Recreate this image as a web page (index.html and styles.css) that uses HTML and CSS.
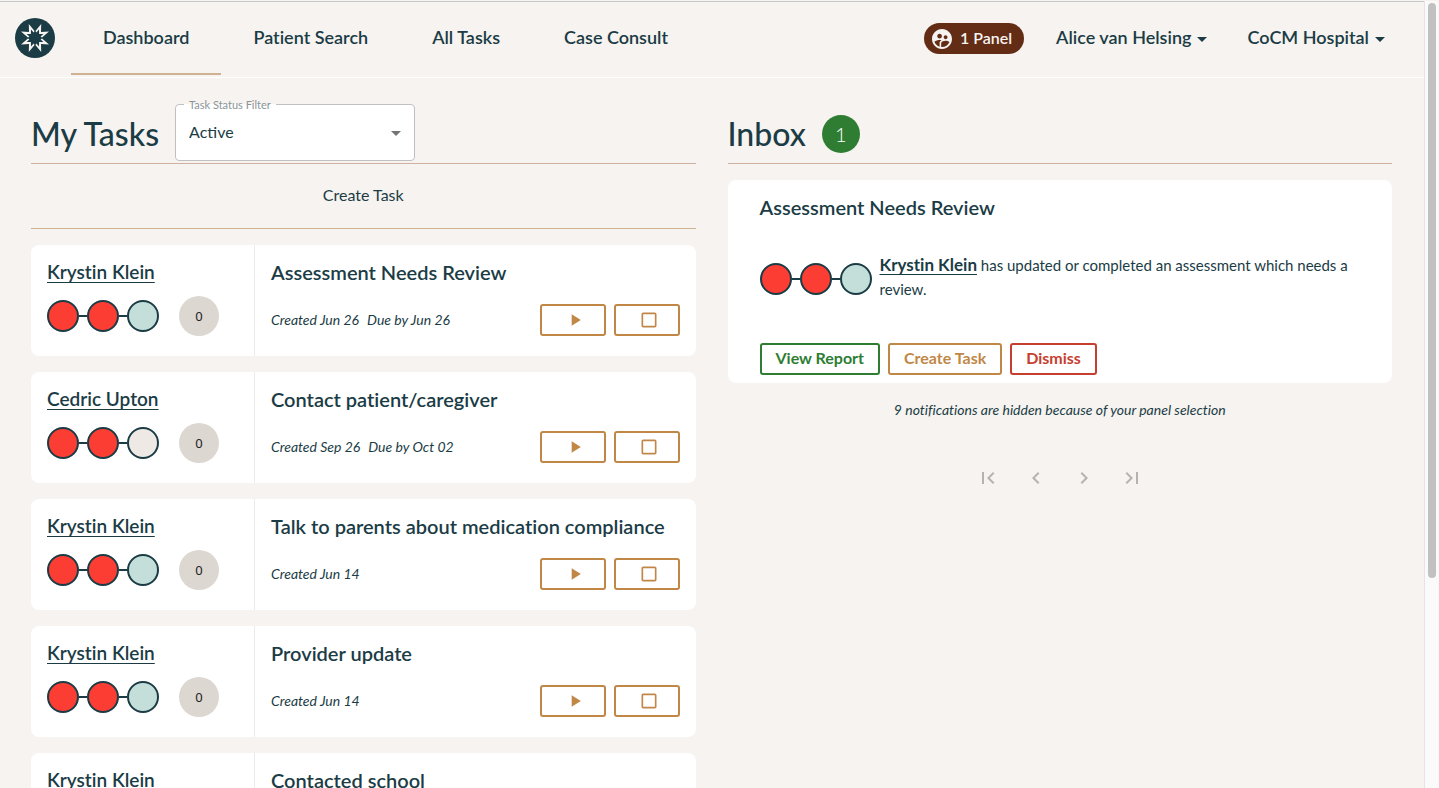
FILE: index.html
```
<!DOCTYPE html>
<html lang="en">
<head>
<meta charset="UTF-8">
<meta name="viewport" content="width=device-width, initial-scale=1.0">
<title>Dashboard</title>
<link rel="stylesheet" href="styles.css">
</head>
<body>
<svg class="symbols" aria-hidden="true">
    <symbol id="play" viewBox="0 0 24 24"><path d="M8 5v14l11-7z"/></symbol>
    <symbol id="stop" viewBox="0 0 24 24"><path fill-rule="evenodd" d="M19 3H5c-1.1 0-2 .9-2 2v14c0 1.1.9 2 2 2h14c1.1 0 2-.9 2-2V5c0-1.1-.9-2-2-2zm0 16H5V5h14v14z"/></symbol>
</svg>

<div class="window">
<div class="page">
    <header class="header">
        <a href="#" class="logo" aria-label="Home">
            <svg viewBox="0 0 40 40" width="40" height="40">
                <circle cx="20" cy="20" r="20" fill="#1b3c45"/>
                <path fill="#f6f3f0" d="M20 13.5L26.2 6L26 14L34 13.6L26.5 20L34 26.4L26 26L26.2 34L20 26.5L13.8 34L14 26L6 26.4L13.5 20L6 13.6L14 14L13.8 6Z"/>
                <path fill="#1b3c45" d="M20 12.6L21.4 14.4L24 11.6L24.1 15.9L28.4 16L25.6 18.6L27.4 20L25.6 21.4L28.4 24L24.1 24.1L24 28.4L21.4 25.6L20 27.4L18.6 25.6L16 28.4L15.9 24.1L11.6 24L14.4 21.4L12.6 20L14.4 18.6L11.6 16L15.9 15.9L16 11.6L18.6 14.4Z"/>
            </svg>
        </a>
        <nav class="nav">
            <a href="#" class="nav-link active">Dashboard</a>
            <a href="#" class="nav-link">Patient Search</a>
            <a href="#" class="nav-link">All Tasks</a>
            <a href="#" class="nav-link">Case Consult</a>
        </nav>
        <button class="panel-button">
            <svg viewBox="0 0 24 24" width="24" height="24" fill="currentColor"><path d="M11.99 2c-5.52 0-10 4.48-10 10s4.48 10 10 10 10-4.48 10-10-4.48-10-10-10zm3.61 6.34c1.07 0 1.93.86 1.93 1.93 0 1.07-.86 1.93-1.93 1.93-1.07 0-1.93-.86-1.93-1.93-.01-1.07.86-1.93 1.93-1.93zm-6-1.58c1.3 0 2.36 1.06 2.36 2.36 0 1.3-1.06 2.36-2.36 2.36-1.3 0-2.36-1.06-2.36-2.36 0-1.31 1.05-2.36 2.36-2.36zm0 9.13v3.75c-2.4-.75-4.3-2.6-5.14-4.96 1.05-1.12 3.67-1.69 5.14-1.69.53 0 1.2.08 1.9.22-1.64.87-1.9 2.02-1.9 2.68zM11.99 20c-.27 0-.53-.01-.79-.04v-4.07c0-1.42 2.94-2.13 4.4-2.13 1.07 0 2.92.39 3.84 1.15-1.17 2.97-4.06 5.09-7.45 5.09z"/></svg>
            <span>1 Panel</span>
        </button>
        <button class="menu-button">Alice van Helsing <span class="caret"></span></button>
        <button class="menu-button">CoCM Hospital <span class="caret"></span></button>
    </header>

    <main class="content">
        <section class="column">
            <div class="column-header">
                <h1>My Tasks</h1>
                <fieldset class="filter">
                    <legend><label for="status">Task Status Filter</label></legend>
                    <select id="status">
                        <option>Active</option>
                        <option>Completed</option>
                    </select>
                    <span class="caret"></span>
                </fieldset>
            </div>
            <button class="create-task">Create Task</button>

            <div class="task-list">
                <article class="task">
                    <div class="patient">
                        <a href="#" class="patient-name">Krystin Klein</a>
                        <div class="patient-status">
                            <div class="dots"><span class="dot red"></span><span class="dot red"></span><span class="dot green"></span></div>
                            <span class="count">0</span>
                        </div>
                    </div>
                    <div class="task-info">
                        <h2>Assessment Needs Review</h2>
                        <div class="task-row">
                            <p class="dates"><span>Created Jun 26</span><span>Due by Jun 26</span></p>
                            <button class="icon-button" aria-label="Start"><svg><use href="#play"/></svg></button>
                            <button class="icon-button" aria-label="Complete"><svg><use href="#stop"/></svg></button>
                        </div>
                    </div>
                </article>

                <article class="task">
                    <div class="patient">
                        <a href="#" class="patient-name">Cedric Upton</a>
                        <div class="patient-status">
                            <div class="dots"><span class="dot red"></span><span class="dot red"></span><span class="dot"></span></div>
                            <span class="count">0</span>
                        </div>
                    </div>
                    <div class="task-info">
                        <h2>Contact patient/caregiver</h2>
                        <div class="task-row">
                            <p class="dates"><span>Created Sep 26</span><span>Due by Oct 02</span></p>
                            <button class="icon-button" aria-label="Start"><svg><use href="#play"/></svg></button>
                            <button class="icon-button" aria-label="Complete"><svg><use href="#stop"/></svg></button>
                        </div>
                    </div>
                </article>

                <article class="task">
                    <div class="patient">
                        <a href="#" class="patient-name">Krystin Klein</a>
                        <div class="patient-status">
                            <div class="dots"><span class="dot red"></span><span class="dot red"></span><span class="dot green"></span></div>
                            <span class="count">0</span>
                        </div>
                    </div>
                    <div class="task-info">
                        <h2>Talk to parents about medication compliance</h2>
                        <div class="task-row">
                            <p class="dates"><span>Created Jun 14</span></p>
                            <button class="icon-button" aria-label="Start"><svg><use href="#play"/></svg></button>
                            <button class="icon-button" aria-label="Complete"><svg><use href="#stop"/></svg></button>
                        </div>
                    </div>
                </article>

                <article class="task">
                    <div class="patient">
                        <a href="#" class="patient-name">Krystin Klein</a>
                        <div class="patient-status">
                            <div class="dots"><span class="dot red"></span><span class="dot red"></span><span class="dot green"></span></div>
                            <span class="count">0</span>
                        </div>
                    </div>
                    <div class="task-info">
                        <h2>Provider update</h2>
                        <div class="task-row">
                            <p class="dates"><span>Created Jun 14</span></p>
                            <button class="icon-button" aria-label="Start"><svg><use href="#play"/></svg></button>
                            <button class="icon-button" aria-label="Complete"><svg><use href="#stop"/></svg></button>
                        </div>
                    </div>
                </article>

                <article class="task">
                    <div class="patient">
                        <a href="#" class="patient-name">Krystin Klein</a>
                    </div>
                    <div class="task-info">
                        <h2>Contacted school</h2>
                    </div>
                </article>
            </div>
        </section>

        <section class="column">
            <div class="column-header">
                <h1>Inbox</h1>
                <span class="badge">1</span>
            </div>

            <article class="message">
                <h2>Assessment Needs Review</h2>
                <div class="message-body">
                    <div class="dots"><span class="dot red"></span><span class="dot red"></span><span class="dot green"></span></div>
                    <p><a href="#">Krystin Klein</a> has updated or completed an assessment which needs a review.</p>
                </div>
                <div class="actions">
                    <button class="action view">View Report</button>
                    <button class="action create">Create Task</button>
                    <button class="action dismiss">Dismiss</button>
                </div>
            </article>

            <p class="hidden-note">9 notifications are hidden because of your panel selection</p>

            <div class="pager">
                <button disabled aria-label="First page"><svg viewBox="0 0 24 24"><path d="M18.41 16.59L13.82 12l4.59-4.59L17 6l-6 6 6 6zM6 6h2v12H6z"/></svg></button>
                <button disabled aria-label="Previous page"><svg viewBox="0 0 24 24"><path d="M15.41 7.41L14 6l-6 6 6 6 1.41-1.41L10.83 12z"/></svg></button>
                <button disabled aria-label="Next page"><svg viewBox="0 0 24 24"><path d="M10 6L8.59 7.41 13.17 12l-4.58 4.59L10 18l6-6z"/></svg></button>
                <button disabled aria-label="Last page"><svg viewBox="0 0 24 24"><path d="M5.59 7.41L10.18 12l-4.59 4.59L7 18l6-6-6-6zM16 6h2v12h-2z"/></svg></button>
            </div>
        </section>
    </main>
</div>
<div class="scrollbar"><div class="thumb"></div></div>
</div>
</body>
</html>
```
FILE: styles.css
```
* {
    box-sizing: border-box;
}

body {
    margin: 0;
    font-family: Lato, sans-serif;
    font-size: 16px;
    line-height: 24px;
    font-variant-ligatures: none;
    color: #1b3c45;
    background-color: #f6f3f0;
}

h1,
h2,
p {
    margin: 0;
}

a {
    color: inherit;
}

button {
    font-family: inherit;
    color: inherit;
    background: none;
    border: none;
    padding: 0;
    cursor: pointer;
}

.symbols {
    display: none;
}

.window {
    display: flex;
    height: 100vh;
    overflow: hidden;
    padding-top: 1px;
}

.page {
    flex: 1;
    min-width: 0;
    border-top: 1px solid #c6cacb;
}

/* header */

.header {
    display: flex;
    align-items: center;
    height: 76px;
    padding: 0 39px 2px 15px;
    border-bottom: 1px solid #fff;
}

.logo {
    padding-bottom: 1px;
}

.logo svg {
    display: block;
}

.nav {
    display: flex;
    flex: 1;
    margin-left: 16px;
}

.nav-link {
    padding: 23px 32px 24px;
    border-bottom: 2px solid transparent;
    font-size: 18px;
    font-weight: 600;
    text-decoration: none;
    white-space: nowrap;
}

.nav-link.active {
    border-bottom-color: #ceb291;
}

.panel-button {
    display: flex;
    align-items: center;
    gap: 6px;
    height: 31px;
    padding: 0 12px 0 6px;
    border-radius: 16px;
    font-size: 16px;
    font-weight: 600;
    color: #f6f3f0;
    background-color: #622c15;
}

.panel-button span {
    padding-bottom: 2px;
}

.menu-button {
    display: flex;
    align-items: center;
    gap: 6px;
    margin-left: 32px;
    padding-bottom: 3px;
    font-size: 18px;
    font-weight: 600;
    white-space: nowrap;
}

.menu-button + .menu-button {
    margin-left: 40px;
}

.caret {
    border: 5px solid transparent;
    border-top-color: currentColor;
    border-bottom: none;
}

.menu-button .caret {
    margin-top: 5px;
}

/* columns */

.content {
    display: grid;
    grid-template-columns: 1fr 1fr;
    gap: 32px;
    padding: 16px 32px 0 31px;
}

.column-header {
    display: flex;
    align-items: center;
    gap: 16px;
    height: 70px;
    padding-top: 10px;
    border-bottom: 1px solid #ceb29f;
}

h1 {
    font-size: 32px;
    font-weight: 500;
    line-height: 40px;
    white-space: nowrap;
}

.filter {
    position: relative;
    width: 240px;
    height: 62px;
    margin: 0 0 8px;
    padding: 0 13px;
    border: 1px solid #c2c0be;
    border-radius: 4px;
    background-color: #fff;
}

.filter legend {
    margin-left: -5px;
    padding: 0 5px;
    font-size: 11px;
    line-height: 12px;
    color: #8a9496;
}

.filter select {
    display: block;
    width: 100%;
    height: 42px;
    appearance: none;
    border: none;
    padding: 0;
    font-family: inherit;
    font-size: 16px;
    color: inherit;
    background: none;
}

.filter .caret {
    position: absolute;
    top: 20px;
    right: 13px;
    color: #757575;
    pointer-events: none;
}

.create-task {
    display: block;
    width: 100%;
    height: 65px;
    padding-bottom: 3px;
    border-bottom: 1px solid #ceb291;
    font-size: 16px;
}

/* tasks */

.task-list {
    display: flex;
    flex-direction: column;
    gap: 16px;
    margin-top: 16px;
}

.task {
    display: grid;
    grid-template-columns: 224px 1fr;
    min-height: 111px;
    border-radius: 8px;
    background-color: #fff;
}

.patient {
    padding: 15px 16px;
    border-right: 1px solid #ebebeb;
}

.patient-name,
h2 {
    display: block;
    font-size: 20px;
    font-weight: 600;
    line-height: 24px;
}

.patient-name {
    font-size: 19px;
    text-underline-offset: 3px;
    text-decoration-thickness: 1px;
}

.patient-status {
    display: flex;
    align-items: center;
    gap: 20px;
    margin-top: 12px;
}

.dots {
    display: flex;
    flex: none;
    align-items: center;
}

.dot {
    width: 32px;
    height: 32px;
    border: 2px solid #1b3c45;
    border-radius: 50%;
    background-color: #eee9e5;
}

.dot.red {
    background-color: #fb3d34;
}

.dot.green {
    background-color: #c4dfd9;
}

/* line between two dots */
.dot + .dot {
    position: relative;
    margin-left: 8px;
}

.dot + .dot::before {
    content: "";
    position: absolute;
    top: 13px;
    left: -10px;
    width: 8px;
    height: 2px;
    background-color: #1b3c45;
}

.count {
    display: flex;
    align-items: center;
    justify-content: center;
    width: 40px;
    height: 40px;
    border-radius: 50%;
    font-family: "Noto Sans", sans-serif;
    font-size: 13px;
    color: #222;
    background-color: #dcd7d0;
}

.task-info {
    padding: 15px 16px;
}

.task-row {
    display: flex;
    align-items: center;
    gap: 8px;
    margin-top: 20px;
}

.dates {
    display: flex;
    flex: 1;
    gap: 8px;
    font-size: 14px;
    font-style: italic;
}

.icon-button {
    display: flex;
    align-items: center;
    justify-content: center;
    width: 66px;
    height: 32px;
    padding-left: 4px;
    border: 2px solid #c08747;
    border-radius: 3px;
    color: #c08747;
}

.icon-button svg {
    width: 20px;
    height: 20px;
    fill: currentColor;
}

/* inbox */

.badge {
    display: flex;
    align-items: center;
    justify-content: center;
    width: 38px;
    height: 38px;
    border-radius: 50%;
    font-size: 20px;
    font-weight: 300;
    color: #fff;
    background-color: #2e7d32;
}

.message {
    margin-top: 16px;
    padding: 15px 32px 8px;
    border-radius: 8px;
    background-color: #fff;
}

.message-body {
    display: flex;
    gap: 8px;
    margin: 34px 0 42px;
    font-size: 15px;
}

.message-body .dots {
    margin-top: 4px;
}

.message-body a {
    font-size: 17px;
    font-weight: 700;
    text-underline-offset: 3px;
}

.actions {
    display: flex;
    gap: 8px;
}

.action {
    height: 32px;
    padding: 0 14px 4px;
    border: 2px solid currentColor;
    border-radius: 3px;
    font-size: 16px;
    font-weight: 700;
}

.view {
    color: #2e7d32;
}

.create {
    color: #c08747;
}

.dismiss {
    color: #c63e2f;
}

.hidden-note {
    margin-top: 15px;
    font-size: 14px;
    font-style: italic;
    text-align: center;
}

.pager {
    display: flex;
    justify-content: center;
    margin-top: 32px;
}

.pager button {
    padding: 12px;
}

.pager svg {
    display: block;
    width: 24px;
    height: 24px;
    fill: #b5b3b1;
}

/* scrollbar */

.scrollbar {
    width: 15px;
    padding: 2px 3px;
    border-left: 1px solid #e4e4e4;
    background-color: #fafafa;
}

.thumb {
    width: 8px;
    height: 73.4%;
    border-radius: 4px;
    background-color: #c1c1c1;
}
```
